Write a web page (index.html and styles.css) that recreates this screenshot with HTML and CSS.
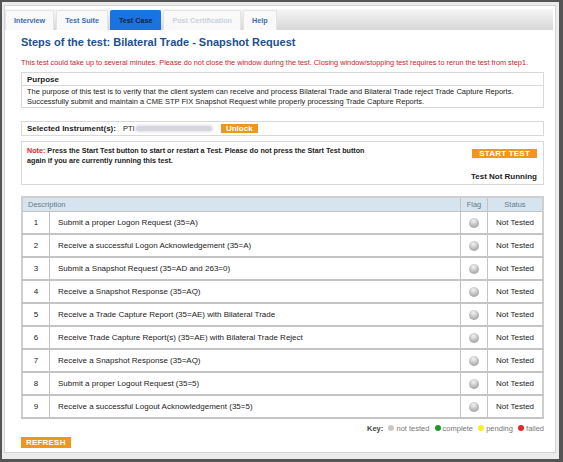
FILE: index.html
```html
<!DOCTYPE html>
<html lang="en">
<head>
  <meta charset="UTF-8" />
  <title>Steps of the test</title>
  <link rel="stylesheet" href="styles.css">
</head>
<body>
  <div class="frame">
    <div class="panel">
      <div class="tabs">
        <span class="tab">Interview</span>
        <span class="tab">Test Suite</span>
        <span class="tab active">Test Case</span>
        <span class="tab disabled">Post Certification</span>
        <span class="tab">Help</span>
      </div>

      <div class="content">
        <h1>Steps of the test: Bilateral Trade - Snapshot Request</h1>
        <p class="warning">This test could take up to several minutes. Please do not close the window during the test. Closing window/stopping test requires to rerun the test from step1.</p>

        <div class="box purpose">
          <div class="box-head">Purpose</div>
          <div class="box-body">The purpose of this test is to verify that the client system can receive and process Bilateral Trade and Bilateral Trade reject Trade Capture Reports.<br>Successfully submit and maintain a CME STP FIX Snapshot Request while properly processing Trade Capture Reports.</div>
        </div>

        <div class="box instrument">
          <span class="label">Selected Instrument(s):</span>
          <span class="inst">PTI<span class="blur"></span></span>
          <span class="btn">Unlock</span>
        </div>

        <div class="box note">
          <div class="note-row">
            <p><span class="red">Note:</span> Press the Start Test button to start or restart a Test. Please do not press the Start Test button<br>again if you are currently running this test.</p>
            <span class="btn start">START TEST</span>
          </div>
          <div class="state">Test Not Running</div>
        </div>

        <table class="steps">
          <thead>
            <tr><th colspan="2" class="desc">Description</th><th class="flag">Flag</th><th class="status">Status</th></tr>
          </thead>
          <tbody>
            <tr><td class="num">1</td><td>Submit a proper Logon Request (35=A)</td><td class="flag"><i class="dot"></i></td><td class="status">Not Tested</td></tr>
            <tr><td class="num">2</td><td>Receive a successful Logon Acknowledgement (35=A)</td><td class="flag"><i class="dot"></i></td><td class="status">Not Tested</td></tr>
            <tr><td class="num">3</td><td>Submit a Snapshot Request (35=AD and 263=0)</td><td class="flag"><i class="dot"></i></td><td class="status">Not Tested</td></tr>
            <tr><td class="num">4</td><td>Receive a Snapshot Response (35=AQ)</td><td class="flag"><i class="dot"></i></td><td class="status">Not Tested</td></tr>
            <tr><td class="num">5</td><td>Receive a Trade Capture Report (35=AE) with Bilateral Trade</td><td class="flag"><i class="dot"></i></td><td class="status">Not Tested</td></tr>
            <tr><td class="num">6</td><td>Receive Trade Capture Report(s) (35=AE) with Bilateral Trade Reject</td><td class="flag"><i class="dot"></i></td><td class="status">Not Tested</td></tr>
            <tr><td class="num">7</td><td>Receive a Snapshot Response (35=AQ)</td><td class="flag"><i class="dot"></i></td><td class="status">Not Tested</td></tr>
            <tr><td class="num">8</td><td>Submit a proper Logout Request (35=5)</td><td class="flag"><i class="dot"></i></td><td class="status">Not Tested</td></tr>
            <tr><td class="num">9</td><td>Receive a successful Logout Acknowledgement (35=5)</td><td class="flag"><i class="dot"></i></td><td class="status">Not Tested</td></tr>
          </tbody>
        </table>

        <div class="key">
          <b>Key:</b>
          <i class="k grey"></i> not tested
          <i class="k green"></i> complete
          <i class="k yellow"></i> pending
          <i class="k red"></i> failed
        </div>

        <span class="btn refresh">REFRESH</span>
      </div>
    </div>
  </div>
</body>
</html>
```

FILE: styles.css
```css
html, body {
  margin: 0;
  height: 100%;
  font-family: "Liberation Sans", Arial, sans-serif;
  font-size: 8px;
  color: #222;
}

.frame {
  box-sizing: border-box;
  width: 563px;
  height: 462px;
  border: solid #555;
  border-width: 2px 4px 3px 2px;
  background-color: #ececec;
  padding: 3px 3px 6px 2px;
}

.panel {
  box-sizing: border-box;
  height: 100%;
  background-color: #fff;
  border: 1px solid #d4d4d4;
  padding: 3px 2px 0 0;
}

/* Tab bar */
.tabs {
  display: flex;
  gap: 2px;
  height: 21px;
  box-sizing: border-box;
  background: linear-gradient(#f6f6f6, #d6d6d6);
  align-items: flex-end;
}

.tab {
  display: flex;
  align-items: center;
  height: 19px;
  padding: 0 8px;
  background-color: #f9f9f9;
  border: 1px solid #e4e4e4;
  border-bottom: none;
  border-radius: 2px 2px 0 0;
  font-weight: bold;
  color: #3a6cb2;
  font-size: 7.2px;
}

.tab.active {
  background-color: #1a74e0;
  color: #0b2140;
  border-color: #1a74e0;
}

.tab.disabled {
  color: #c9d2de;
}

.content {
  padding: 0 9px 0 16px;
}

h1 {
  font-size: 11px;
  line-height: 13px;
  color: #1d4f8f;
  margin: 6px 0 9px 0;
}

.warning {
  color: #c0282d;
  margin: 0 0 4px 0;
  font-size: 7.3px;
  line-height: 10px;
  white-space: nowrap;
}

.box {
  border: 1px solid #d8d8d8;
}

.box-head {
  font-weight: bold;
  line-height: 11px;
  padding: 1px 5px 0 5px;
  border-bottom: 1px solid #d8d8d8;
}

.box-body {
  padding: 1px 5px 0 5px;
  line-height: 10px;
  font-size: 7.5px;
  white-space: nowrap;
}

.purpose {
  margin-bottom: 13px;
}

.instrument {
  display: flex;
  align-items: center;
  box-sizing: border-box;
  height: 15px;
  padding: 0 5px;
  margin-bottom: 5px;
}

.label {
  font-weight: bold;
  margin-right: 7px;
}

.inst {
  display: flex;
  align-items: center;
  width: 98px;
  font-size: 7.5px;
}

.blur {
  display: inline-block;
  width: 76px;
  height: 5px;
  margin-left: 1px;
  background-color: #d6d6de;
  border-radius: 3px;
  box-shadow: 0 0 3px 1px #e2e2e8;
}

.btn {
  display: inline-block;
  background-color: #ee961d;
  color: #fff;
  font-weight: bold;
  line-height: 9px;
  padding: 0 5px;
  font-size: 8px;
}

.note {
  box-sizing: border-box;
  height: 44px;
  padding: 4px 6px 0 5px;
  margin-bottom: 11px;
}

.note-row {
  display: flex;
  justify-content: space-between;
  align-items: flex-start;
}

.note-row p {
  margin: 0;
  font-weight: bold;
  font-size: 7.2px;
  line-height: 9.5px;
  white-space: nowrap;
}

.red {
  color: #e3262b;
}

.btn.start {
  padding: 0 7px;
  margin-top: 3px;
  letter-spacing: 0.2px;
}

.state {
  text-align: right;
  font-weight: bold;
  line-height: 10px;
  margin-top: 7px;
}

/* Steps table */
.steps {
  width: 100%;
  border-collapse: collapse;
  border: 2px solid #cfcfcf;
}

.steps th {
  background-color: #d5e4ee;
  color: #6a7a88;
  font-weight: normal;
  height: 13px;
  padding: 0;
  border: 1px solid #c2c2c2;
  text-align: center;
  font-size: 7.5px;
}

.steps th.desc {
  text-align: left;
  padding-left: 5px;
}

.steps td {
  height: 21px;
  border: 1px solid #c4c4c4;
  border-bottom-width: 2px;
  padding: 0 8px;
}

.steps td.num {
  width: 10px;
  text-align: center;
}

.steps .flag {
  width: 26px;
  padding: 0;
  text-align: center;
}

.steps .status {
  width: 54px;
  padding: 0;
  text-align: center;
}

.dot {
  display: inline-block;
  width: 10px;
  height: 10px;
  border-radius: 50%;
  background: radial-gradient(circle at 45% 30%, #f4f4f4, #b0b0b0 65%, #8a8a8a);
  vertical-align: middle;
}

.key {
  text-align: right;
  margin-top: 5px;
  line-height: 10px;
  color: #777;
  font-size: 7.5px;
}

.key b {
  color: #444;
}

.k {
  display: inline-block;
  width: 6px;
  height: 6px;
  border-radius: 50%;
  margin-left: 3px;
}

.k.grey { background-color: #c8c8c8; }
.k.green { background-color: #1f9a2a; }
.k.yellow { background-color: #f4ef2a; }
.k.red { background-color: #e2262b; }

.btn.refresh {
  margin-top: 3px;
  line-height: 11px;
  padding: 0 5px;
  letter-spacing: 0.2px;
}
```
